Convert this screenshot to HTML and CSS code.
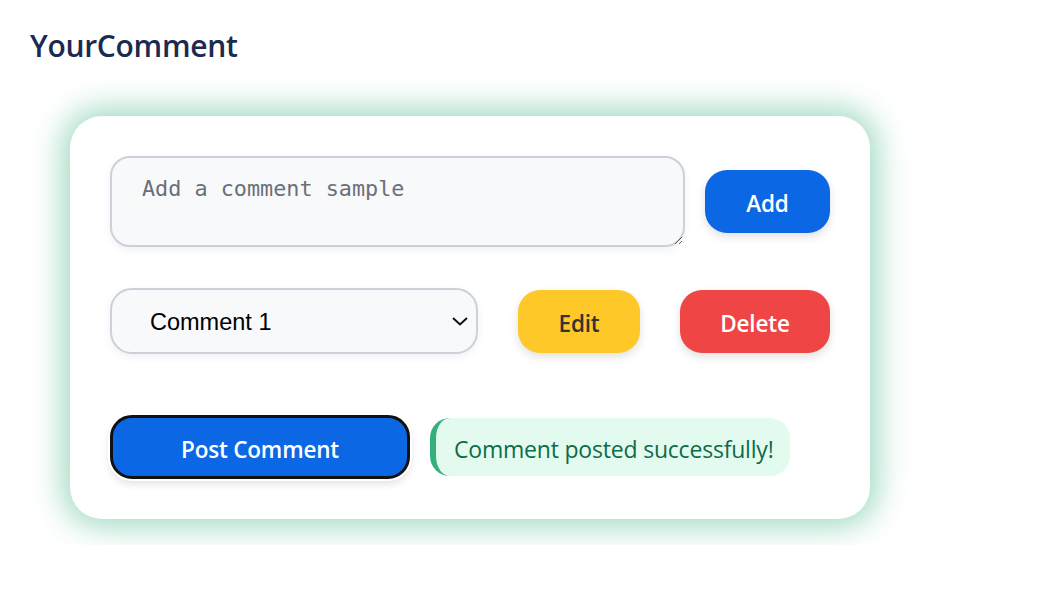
FILE: index.html
```html
<!DOCTYPE html>
<html lang="en">
<head>
<meta charset="utf-8">
<title>YourComment</title>
<link rel="stylesheet" href="styles.css">
</head>
<body>
  <h1 class="title">YourComment</h1>
  <div class="card">
    <div class="row row-top">
      <textarea class="comment-input" placeholder="Add a comment sample"></textarea>
      <button class="btn btn-blue btn-add">Add</button>
    </div>
    <div class="row row-mid">
      <div class="select-wrap">
        <select class="comment-select">
          <option>Comment 1</option>
        </select>
        <svg class="chev" width="18" height="12" viewBox="0 0 18 12"><path d="M2 3 L9 9.5 L16 3" fill="none" stroke="#111" stroke-width="2"/></svg>
      </div>
      <button class="btn btn-yellow btn-edit">Edit</button>
      <button class="btn btn-red btn-delete">Delete</button>
    </div>
    <div class="row row-bottom">
      <button class="btn btn-blue btn-post">Post Comment</button>
      <div class="message">Comment posted successfully!</div>
    </div>
  </div>
</body>
</html>
```
FILE: styles.css
```css
* { box-sizing: border-box; }
html, body { margin: 0; background: #fff; }
body {
  font-family: "Open Sans", "Noto Sans", sans-serif;
  padding: 26px 30px;
}
.title {
  margin: 0;
  font-size: 30px;
  font-weight: 600;
  color: #1b2a4e;
  line-height: 40px;
  letter-spacing: -0.3px;
}
.card {
  margin: 50px 0 0 40px;
  width: 800px;
  height: 403px;
  background: #fff;
  border-radius: 32px;
  padding: 40px;
  box-shadow: 0 0 30px 8px rgba(52, 176, 122, 0.45);
}
.row { display: flex; align-items: center; }
.row-top { gap: 20px; }
.comment-input {
  width: 575px;
  height: 91px;
  border: 2px solid #cbd0da;
  border-radius: 20px;
  background: #f8f9fb;
  padding: 18px 30px;
  font-family: "DejaVu Sans Mono", "Liberation Mono", monospace;
  font-size: 21.8px;
  color: #333;
  box-shadow: 0 3px 8px rgba(0,0,0,0.06);
  resize: both;
  outline: none;
}
.comment-input::placeholder { color: #6b6f78; }
.btn {
  border: none;
  font-family: "Open Sans", "Noto Sans", sans-serif;
  font-weight: 600;
  font-size: 22.5px;
  height: 63px;
  border-radius: 22px;
  box-shadow: 0 4px 10px rgba(0,0,0,0.12);
  padding: 4px 0 0;
  letter-spacing: -0.2px;
}
.btn-blue { background: #0b67e4; color: #fff; }
.btn-yellow { background: #fdc828; color: #333; }
.btn-red { background: #ef4545; color: #fff; }
.btn-add { width: 125px; }
.row-mid { margin-top: 41px; gap: 40px; }
.select-wrap { position: relative; }
.comment-select {
  appearance: none;
  width: 368px;
  height: 66px;
  border: 2px solid #cbd0da;
  border-radius: 22px;
  background: #f8f9fb;
  padding: 2px 38px 0;
  font-family: "Liberation Sans", Arial, sans-serif;
  font-size: 23.5px;
  color: #000;
  box-shadow: 0 3px 8px rgba(0,0,0,0.06);
  outline: none;
}
.chev { position: absolute; right: 9px; top: 27px; }
.btn-edit { width: 122px; }
.btn-delete { width: 150px; }
.row-bottom { margin-top: 61px; gap: 20px; }
.btn-post {
  width: 300px;
  height: 64px;
  border: 3px solid #111;
  font-size: 22.5px;
  box-shadow: 0 0 0 2px #fff, 0 4px 10px rgba(0,0,0,0.14);
}
.message {
  width: 360px;
  height: 58px;
  display: flex;
  align-items: center;
  background: #e3fbee;
  border-left: 6px solid #34b07c;
  border-radius: 20px;
  padding: 3px 0 0 18px;
  font-size: 23px;
  color: #0d6b4a;
  letter-spacing: -0.2px;
}
```
